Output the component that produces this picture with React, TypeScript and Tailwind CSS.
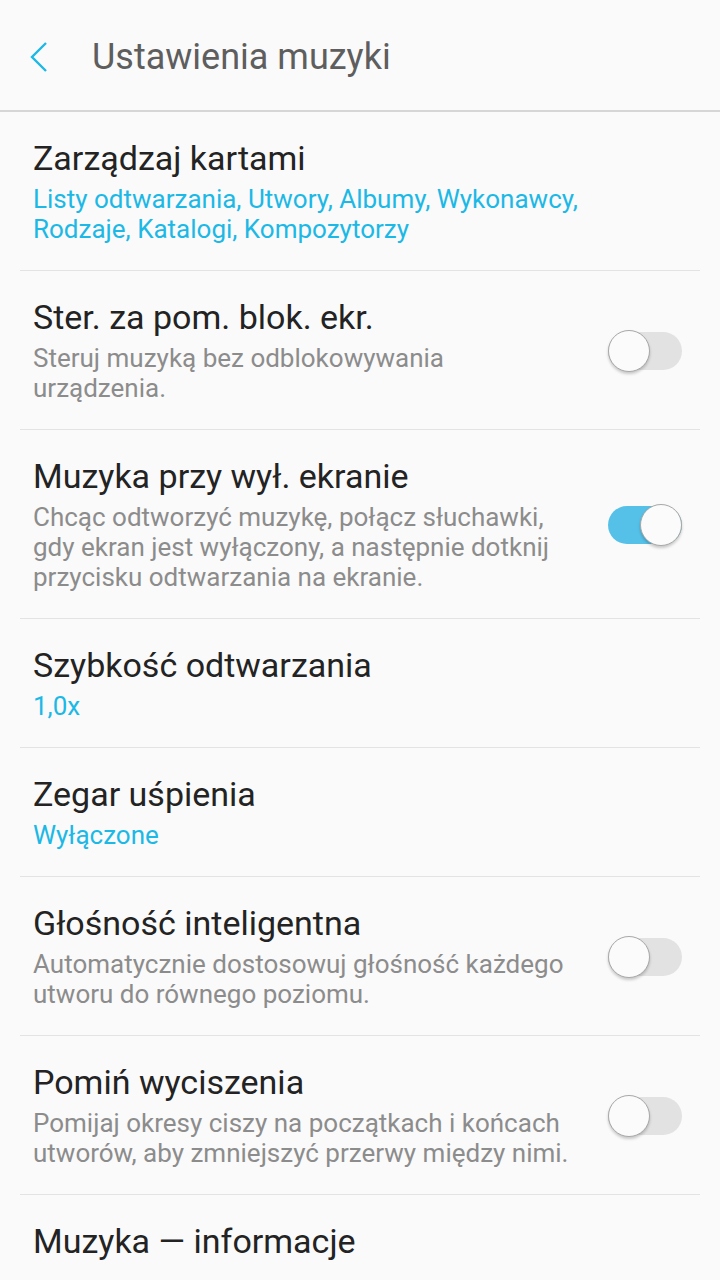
import { useState } from "react";

type Item = {
  title: string;
  sub?: string;
  accent?: boolean;
  toggle?: boolean;
};

const items: Item[] = [
  {
    title: "Zarządzaj kartami",
    sub: "Listy odtwarzania, Utwory, Albumy, Wykonawcy, Rodzaje, Katalogi, Kompozytorzy",
    accent: true,
  },
  {
    title: "Ster. za pom. blok. ekr.",
    sub: "Steruj muzyką bez odblokowywania urządzenia.",
    toggle: false,
  },
  {
    title: "Muzyka przy wył. ekranie",
    sub: "Chcąc odtworzyć muzykę, połącz słuchawki, gdy ekran jest wyłączony, a następnie dotknij przycisku odtwarzania na ekranie.",
    toggle: true,
  },
  { title: "Szybkość odtwarzania", sub: "1,0x", accent: true },
  { title: "Zegar uśpienia", sub: "Wyłączone", accent: true },
  {
    title: "Głośność inteligentna",
    sub: "Automatycznie dostosowuj głośność każdego utworu do równego poziomu.",
    toggle: false,
  },
  {
    title: "Pomiń wyciszenia",
    sub: "Pomijaj okresy ciszy na początkach i końcach utworów, aby zmniejszyć przerwy między nimi.",
    toggle: false,
  },
  { title: "Muzyka — informacje" },
];

const Switch = ({ on }: { on: boolean }) => {
  const [checked, setChecked] = useState(on);
  return (
    <button
      onClick={() => setChecked(!checked)}
      className="relative w-[76px] h-[44px] shrink-0 flex items-center"
    >
      <span
        className={`absolute left-0 right-[2px] h-[38px] rounded-full ${
          checked ? "bg-[#56c1e8]" : "bg-[#e2e2e2]"
        }`}
      />
      <span
        className={`absolute top-[1px] w-[42px] h-[42px] rounded-full bg-[#fbfbfb] border border-[#a8a8a8] shadow-[0_2px_3px_rgba(0,0,0,0.2)] ${
          checked ? "left-[32px]" : "left-0"
        }`}
      />
    </button>
  );
};

const App = () => {
  return (
    <div className="min-h-[1280px] bg-[#fafafa] font-['Roboto',sans-serif]">
      <header className="h-[112px] pt-[4px] flex items-center border-b-2 border-[#d6d6d6]">
        <div className="w-[92px] pl-[30px]">
          <svg width="18" height="32" viewBox="0 0 18 32" fill="none">
            <path d="M16 2 L2 16 L16 30" stroke="#1cb8e6" strokeWidth="2.4" />
          </svg>
        </div>
        <h1 className="text-[36px] text-[#5e5e5e]">Ustawienia muzyki</h1>
      </header>

      <div className="px-[20px]">
        {items.map((item, i) => (
          <div
            key={item.title}
            className={`flex items-center pl-[13px] pr-[16px] pt-[28px] pb-[26px] ${
              i < items.length - 1 ? "border-b border-[#e3e3e3]" : ""
            }`}
          >
            <div className="flex-1 pr-[26px]">
              <div className="text-[34px] leading-[36px] text-[#232323]">{item.title}</div>
              {item.sub && (
                <div
                  className={`mt-[8px] text-[26px] leading-[30px] ${
                    item.accent ? "text-[#1cb8e6]" : "text-[#8c8c8c]"
                  }`}
                >
                  {item.sub}
                </div>
              )}
            </div>
            {item.toggle !== undefined && <Switch on={item.toggle} />}
          </div>
        ))}
      </div>
    </div>
  );
};

export default App;
